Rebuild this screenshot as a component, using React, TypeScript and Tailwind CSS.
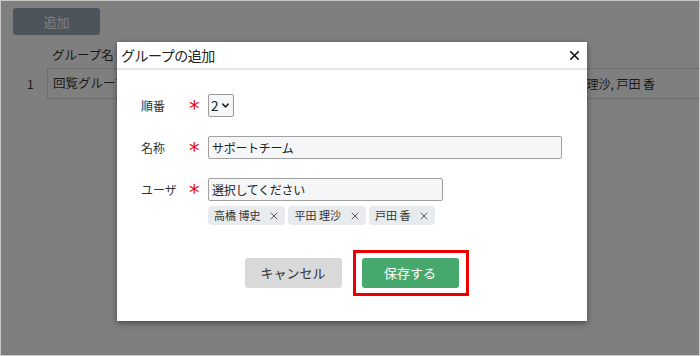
import { X, ChevronDown } from 'lucide-react';

const font = { fontFamily: '"Noto Sans CJK JP", "Noto Sans", sans-serif' };
const star = { fontFamily: '"DejaVu Sans", sans-serif' };

const Required = () => (
  <span className="w-[20px] h-[23px] flex items-start pt-[5px] pl-[2px] text-[#e60000] text-[21px] leading-none" style={star}>
    *
  </span>
);

const App = () => {
  const users = ['高橋 博史', '平田 理沙', '戸田 香'];

  return (
    <div
      className="relative w-[700px] h-[356px] overflow-hidden bg-white border border-[#c8c8c8] text-[#333]"
      style={font}
    >
      {/* Page behind */}
      <div className="pl-3 pt-[7px]">
        <button className="w-[87px] h-[27px] rounded-[3px] bg-[#98a8b8] text-white text-[13px]">追加</button>
        <div className="mt-[8px] text-[13px]">
          <div className="flex h-[25px] items-center">
            <div className="w-[34px]" />
            <div className="pl-[5px] text-[12.5px]">グループ名</div>
          </div>
          <div className="flex h-[31px] items-center border-t border-b border-[#dcdcdc] ml-[34px] -mr-px">
            <div className="-ml-[20px] w-[20px] text-[12px]">1</div>
            <div className="h-full border-x border-[#dcdcdc] w-[160px] flex items-center pl-[5px] text-[12.5px]">回覧グループ</div>
            <div className="pl-[296px] text-[12px]">高橋 博史, 平田 理沙, 戸田 香</div>
          </div>
        </div>
      </div>

      {/* Overlay */}
      <div className="absolute inset-0 bg-black/50" />

      {/* Modal */}
      <div className="absolute left-[116px] top-[41px] w-[470px] h-[279px] bg-white shadow-[0_2px_6px_rgba(0,0,0,0.45)] flex flex-col">
        <div className="h-[28px] flex items-center justify-between pl-[4px] pr-[5px] border-b-2 border-[#e2e5ea]">
          <span className="text-[14px] tracking-[-0.5px] text-[#222]">グループの追加</span>
          <X className="w-[15px] h-[15px] text-[#111]" strokeWidth={2.6} />
        </div>

        <div className="flex flex-col pl-[24px] pt-[24px] text-[12px]">
          <div className="flex items-center h-[23px]">
            <span className="w-[46px]">順番</span>
            <Required />
            <div className="ml-[1px] w-[26px] h-[23px] border border-[#9a9a9a] rounded-[2px] bg-[#f4f6f8] flex items-center pl-[2px] text-[13.5px] text-[#222]">
              2
              <ChevronDown className="w-[11px] h-[11px] ml-[1px]" strokeWidth={3.2} />
            </div>
          </div>

          <div className="flex items-center h-[23px] mt-[19px]">
            <span className="w-[46px]">名称</span>
            <Required />
            <div className="ml-[1px] w-[354px] h-[23px] border border-[#a0a0a0] rounded-[2px] bg-[#f4f6f8] flex items-center pl-[3px] text-[#222] tracking-[-0.3px]">
              サポートチーム
            </div>
          </div>

          <div className="flex mt-[19px]">
            <span className="w-[46px] h-[23px] flex items-center">ユーザ</span>
            <Required />
            <div className="ml-[1px] flex flex-col">
              <div className="w-[235px] h-[23px] border border-[#a0a0a0] rounded-[2px] bg-[#f4f6f8] flex items-center pl-[3px] text-[#222] tracking-[-0.3px]">
                選択してください
              </div>
              <div className="flex gap-[3px] mt-[5px]">
                {users.map((u, i) => (
                  <span
                    key={i}
                    className="h-[19px] pl-[6px] pr-[5px] rounded-[4px] bg-[#e8ebee] flex items-center gap-[8px] text-[11px] text-[#333]"
                  >
                    {u}
                    <X className="w-[12px] h-[12px]" strokeWidth={1.6} />
                  </span>
                ))}
              </div>
            </div>
          </div>
        </div>

        <div className="flex justify-center gap-[20px] mt-[33px] pr-[1px]">
          <button className="w-[97px] h-[30px] rounded-[3px] bg-[#d9d9d9] text-[13px] text-[#333]">キャンセル</button>
          <div className="relative">
            <button className="w-[97px] h-[30px] rounded-[3px] bg-[#46a86c] text-[13px] text-white">保存する</button>
            <div className="absolute -left-[9px] -top-[8px] w-[116px] h-[46px] border-[3px] border-[#ee0000]" />
          </div>
        </div>
      </div>
    </div>
  );
};

export default App;
